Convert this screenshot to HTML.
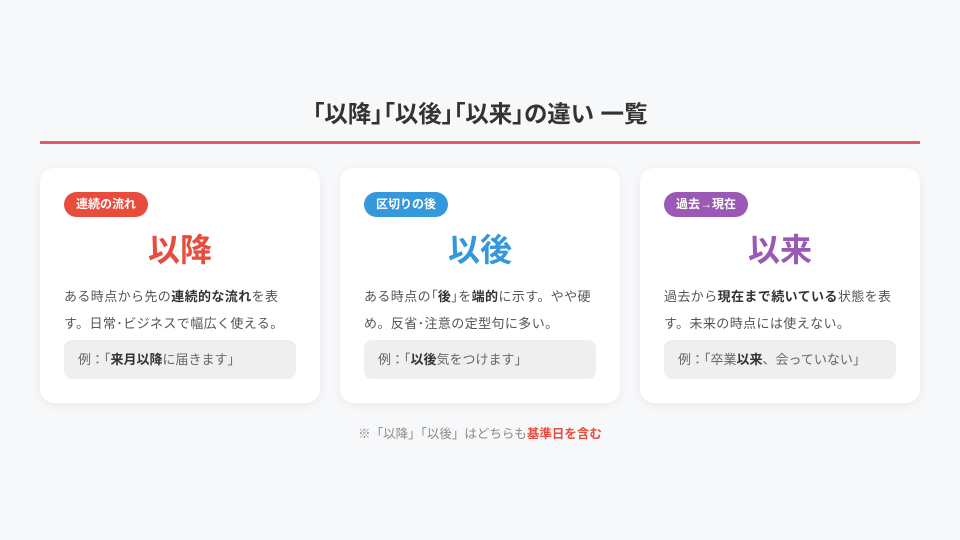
<!DOCTYPE html>
<html><head><meta charset="utf-8"><style>
*{margin:0;padding:0;box-sizing:border-box}
body{width:960px;height:540px;background:#f7f8fa;font-family:"Liberation Sans","Noto Sans CJK JP",sans-serif;color:#444;position:relative;overflow:hidden}
h1{position:absolute;top:98px;left:0;width:960px;text-align:center;font-size:23.5px;font-weight:700;color:#333;line-height:32px;font-feature-settings:"palt"}
.line{position:absolute;left:40px;top:141px;width:880px;height:3px;background:#e45a6b}
.card{position:absolute;top:168px;width:280px;height:235px;background:#fff;border-radius:14px;box-shadow:0 2px 10px rgba(0,0,0,.06);padding:0 24px}
.badge{position:absolute;left:24px;top:24px;height:25px;line-height:25px;padding:0 12px;border-radius:13px;color:#fff;font-size:12px;font-weight:700}
.big{position:absolute;top:60px;left:0;width:280px;text-align:center;font-size:32px;font-weight:700;line-height:44px}
.desc{position:absolute;top:115px;left:24px;white-space:nowrap;font-size:13px;letter-spacing:0.4px;line-height:27px;color:#555}
.desc b{color:#333}
.ex{position:absolute;top:172px;left:24px;width:232px;height:39px;background:#efefef;border-radius:8px;font-size:13px;line-height:39px;padding-left:14px;color:#666;white-space:nowrap}
.ex b{color:#333}
.note{position:absolute;top:424px;left:0;width:960px;text-align:center;font-size:12.5px;color:#888;line-height:20px}
.note b{color:#e74c3c}
</style></head><body>
<h1>「以降」「以後」「以来」の違い 一覧</h1>
<div class="line"></div>
<div class="card" style="left:40px">
<div class="badge" style="background:#e74c3c">連続の流れ</div>
<div class="big" style="color:#e74c3c">以降</div>
<div class="desc">ある時点から先の<b>連続的な流れ</b>を表<br>す。日常･ビジネスで幅広く使える。</div>
<div class="ex">例：「<b>来月以降</b>に届きます」</div>
</div>
<div class="card" style="left:340px">
<div class="badge" style="background:#3498db">区切りの後</div>
<div class="big" style="color:#3498db">以後</div>
<div class="desc">ある時点の<span style="font-feature-settings:'palt'">「</span><b>後</b><span style="font-feature-settings:'palt'">」</span>を<b>端的</b>に示す。やや硬<br>め。反省･注意の定型句に多い。</div>
<div class="ex">例：「<b>以後</b>気をつけます」</div>
</div>
<div class="card" style="left:640px">
<div class="badge" style="background:#9b59b6">過去→現在</div>
<div class="big" style="color:#9b59b6">以来</div>
<div class="desc">過去から<b>現在まで続いている</b>状態を表<br>す。未来の時点には使えない。</div>
<div class="ex">例：「卒業<b>以来</b>、会っていない」</div>
</div>
<div class="note">※「以降」「以後」はどちらも<b>基準日を含む</b></div>
</body></html>
